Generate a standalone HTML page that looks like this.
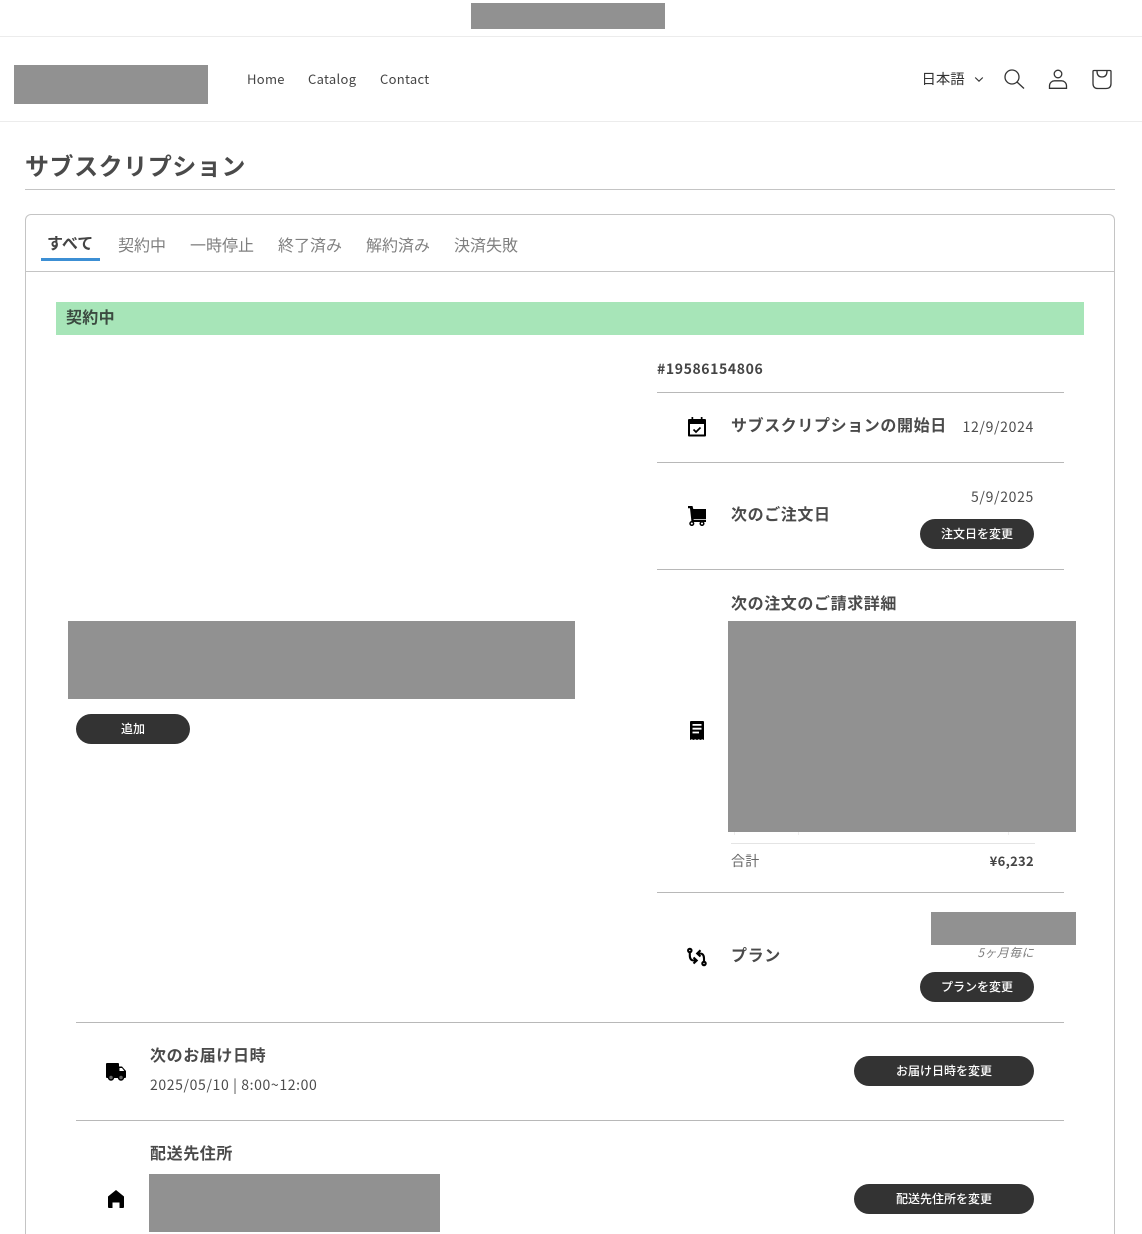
<!DOCTYPE html>
<html lang="ja">
<head>
<meta charset="utf-8">
<title>サブスクリプション</title>
<style>
html,body{margin:0;padding:0;background:#fff;width:1142px;height:1234px;overflow:hidden}
body{position:relative;font-family:"Noto Sans CJK JP","Liberation Sans",sans-serif;color:#3f3f3f}
#p{position:absolute;left:0;top:0;width:1142px;height:1234px;overflow:hidden;contain:paint}
.a{position:absolute;white-space:nowrap}
.r{position:absolute;background:#919191}
.l{position:absolute;height:1px;background:#b8b8b8}
.h{font-size:16px;font-weight:700;line-height:24px;color:#4a4a4a;letter-spacing:.6px}
.t{font-size:14px;line-height:20px;color:#4c4c4c;letter-spacing:.68px}
.nav{font-size:13px;line-height:20px;color:#444;letter-spacing:.3px}
.tab{font-size:16px;line-height:24px;color:#808080}
.b{position:absolute;height:30px;border-radius:15px;background:#333;color:#fff;font-size:12px;font-weight:500;line-height:30px;text-align:center}
svg{position:absolute;display:block}
</style>
</head>
<body>
<div id="p">
<div class="r" style="left:471px;top:3px;width:194px;height:26px"></div>
<div class="l" style="left:0;top:36px;width:1142px;background:#ececec"></div>
<div class="r" style="left:14px;top:65px;width:194px;height:39px"></div>
<div class="a nav" style="left:247px;top:69px">Home</div>
<div class="a nav" style="left:308px;top:69px">Catalog</div>
<div class="a nav" style="left:380px;top:69px">Contact</div>
<div class="a" style="left:921.500px;top:69px;font-size:14.400px;line-height:20px;color:#333">日本語</div>
<svg style="left:974px;top:76px" width="10" height="7" viewBox="0 0 10 7"><path d="M1.200 1.500 5 5.200 8.800 1.500" fill="none" stroke="#333" stroke-width="1.100"/></svg>
<svg style="left:1003px;top:68px" width="22" height="22" viewBox="0 0 22 22" fill="none" stroke="#333" stroke-width="1.300"><circle cx="9" cy="9" r="7"/><path d="M14 14 21 20.500"/></svg>
<svg style="left:1047px;top:68px" width="22" height="22" viewBox="0 0 22 22" fill="none" stroke="#333" stroke-width="1.300"><circle cx="11" cy="6" r="3.800"/><path d="M2.500 20.300v-2.500c0-3 2.500-5 5-5h7c2.500 0 5 2 5 5v2.500z"/></svg>
<svg style="left:1091px;top:68px" width="22" height="22" viewBox="0 0 22 22" fill="none" stroke="#333" stroke-width="1.300"><path d="M3 2.500h16q1 0 1 1v12q0 5-5 5H7q-5 0-5-5v-12q0-1 1-1z"/><path d="M6 3q0 6 5 6t5-6"/></svg>
<div class="l" style="left:0;top:121px;width:1142px;background:#ececec"></div>

<div class="a" style="left:25px;top:148px;font-size:24px;font-weight:700;line-height:34px;color:#4a4a4a;letter-spacing:.55px">サブスクリプション</div>
<div class="l" style="left:25px;top:189px;width:1090px;background:#c4c4c4"></div>

<div style="position:absolute;left:25px;top:214px;width:1088px;height:1020px;border:1px solid #c4c4c4;border-bottom:0;border-radius:6px 6px 0 0;box-sizing:content-box"></div>
<div class="a" style="left:47px;top:230px;font-size:16px;font-weight:700;line-height:24px;color:#444">すべて</div>
<div style="position:absolute;left:41px;top:258px;width:59px;height:3px;background:#3c8fd4"></div>
<div class="a tab" style="left:118px;top:232px">契約中</div>
<div class="a tab" style="left:190px;top:232px">一時停止</div>
<div class="a tab" style="left:278px;top:232px">終了済み</div>
<div class="a tab" style="left:366px;top:232px">解約済み</div>
<div class="a tab" style="left:454px;top:232px">決済失敗</div>
<div class="l" style="left:26px;top:271px;width:1088px;background:#c4c4c4"></div>

<div style="position:absolute;left:56px;top:302px;width:1028px;height:33px;background:#a7e5b8"></div>
<div class="a" style="left:66px;top:304px;font-size:16px;font-weight:700;line-height:24px;color:#3b4a40;letter-spacing:.3px">契約中</div>

<div class="r" style="left:68px;top:621px;width:507px;height:78px"></div>
<div class="b" style="left:76px;top:714px;width:114px">追加</div>

<div class="a" style="left:657px;top:359px;font-size:14px;font-weight:700;line-height:20px;color:#444;letter-spacing:.6px">#19586154806</div>
<div class="l" style="left:657px;top:392px;width:407px"></div>

<svg style="left:687px;top:417px" width="20" height="20" viewBox="0 0 20 20"><path d="M4.500 0h1.700v2h7.600V0h1.700v2H18a1 1 0 0 1 1 1v15.500a1 1 0 0 1-1 1H2a1 1 0 0 1-1-1V3a1 1 0 0 1 1-1h2.500z"/><rect x="3" y="7" width="14" height="10.500" fill="#fff"/><path d="M6.500 12.500 9 15l4.500-4.500" fill="none" stroke="#000" stroke-width="1.700"/></svg>
<div class="a h" style="left:731px;top:412px">サブスクリプションの開始日</div>
<div class="a t" style="right:108px;top:417px">12/9/2024</div>
<div class="l" style="left:657px;top:462px;width:407px"></div>

<svg style="left:687px;top:506px" width="20" height="20" viewBox="0 0 20 20"><path d="M1 0h4.500l.8 3H19v10H6.500l.2 .8H19V16H4.500L3 2.200H1z"/><circle cx="4.800" cy="17.500" r="1.800" fill="#fff" stroke="#000" stroke-width="1.500"/><circle cx="15" cy="17.500" r="1.800" fill="#fff" stroke="#000" stroke-width="1.500"/></svg>
<div class="a h" style="left:731px;top:501px">次のご注文日</div>
<div class="a t" style="right:108px;top:487px">5/9/2025</div>
<div class="b" style="left:920px;top:519px;width:114px">注文日を変更</div>
<div class="l" style="left:657px;top:569px;width:407px"></div>

<div class="a h" style="left:731px;top:590px">次の注文のご請求詳細</div>
<div class="r" style="left:728px;top:621px;width:348px;height:211px"></div>
<div style="position:absolute;left:734px;top:832px;width:1px;height:3px;background:#eee"></div>
<div style="position:absolute;left:798px;top:832px;width:1px;height:3px;background:#eee"></div>
<div style="position:absolute;left:1008px;top:832px;width:1px;height:3px;background:#eee"></div>
<svg style="left:690px;top:721px" width="14" height="20" viewBox="0 0 14 20"><path d="M1 0h12a1 1 0 0 1 1 1v18l-1.750-.8-1.750.8-1.750-.8L7 19l-1.750-.8-1.750.8-1.750-.8L0 19V1a1 1 0 0 1 1-1z"/><path d="M2.500 3h9v1.800h-9zM2.500 6.800h9v1.800h-9zM2.500 10.600h6.500v1.800H2.500z" fill="#fff"/></svg>
<div class="l" style="left:731px;top:843px;width:304px;background:#e4e4e4"></div>
<div class="a t" style="left:731px;top:851px;color:#666;letter-spacing:.3px">合計</div>
<div class="a" style="right:108px;top:851px;font-size:13px;font-weight:700;line-height:20px;color:#444;letter-spacing:.3px">¥6,232</div>
<div class="l" style="left:657px;top:892px;width:407px"></div>

<svg style="left:687px;top:947px" width="20" height="20" viewBox="0 0 20 20" fill="none" stroke="#000" stroke-width="2.100"><circle cx="2.800" cy="3.500" r="1.700"/><path d="M2.800 5.500v3q0 5 4 5h3"/><path d="M6.500 10.500l3.200 3-3.200 3"/><circle cx="17" cy="16.500" r="1.700"/><path d="M17 14.500v-3q0-5-4-5h-3"/><path d="M13.500 3.200 10.200 6.500l3.300 3"/></svg>
<div class="a h" style="left:731px;top:942px">プラン</div>
<div class="r" style="left:931px;top:912px;width:145px;height:33px"></div>
<div class="a" style="right:108px;top:944px;font-size:12px;line-height:18px;font-style:italic;color:#808080;letter-spacing:.4px">5ヶ月毎に</div>
<div class="b" style="left:920px;top:972px;width:114px">プランを変更</div>
<div class="l" style="left:76px;top:1022px;width:988px"></div>

<svg style="left:106px;top:1062px" width="20" height="19" viewBox="0 0 20 19"><path d="M1 1h11a1 1 0 0 1 1 1v2.500h3l4 4.500v6a1 1 0 0 1-1 1H1a1 1 0 0 1-1-1V2a1 1 0 0 1 1-1z"/><path d="M13.500 6h2.500l2.300 3h-4.800z" fill="#fff"/><circle cx="5" cy="15.500" r="2.500" fill="#666" stroke="#000" stroke-width="1.500"/><circle cx="15" cy="15.500" r="2.500" fill="#666" stroke="#000" stroke-width="1.500"/></svg>
<div class="a h" style="left:150px;top:1042px">次のお届け日時</div>
<div class="a t" style="left:150px;top:1075px;letter-spacing:.62px">2025/05/10 | 8:00~12:00</div>
<div class="b" style="left:854px;top:1056px;width:180px">お届け日時を変更</div>
<div class="l" style="left:76px;top:1120px;width:988px"></div>

<svg style="left:107px;top:1190px" width="18" height="18" viewBox="0 0 18 18"><path d="M9 0 17 6.500V17a1 1 0 0 1-1 1h-3.500v-5.500h-7V18H2a1 1 0 0 1-1-1V6.500z"/></svg>
<div class="a h" style="left:150px;top:1140px">配送先住所</div>
<div class="r" style="left:149px;top:1174px;width:291px;height:58px"></div>
<div class="b" style="left:854px;top:1184px;width:180px">配送先住所を変更</div>
</div>
</body>
</html>
